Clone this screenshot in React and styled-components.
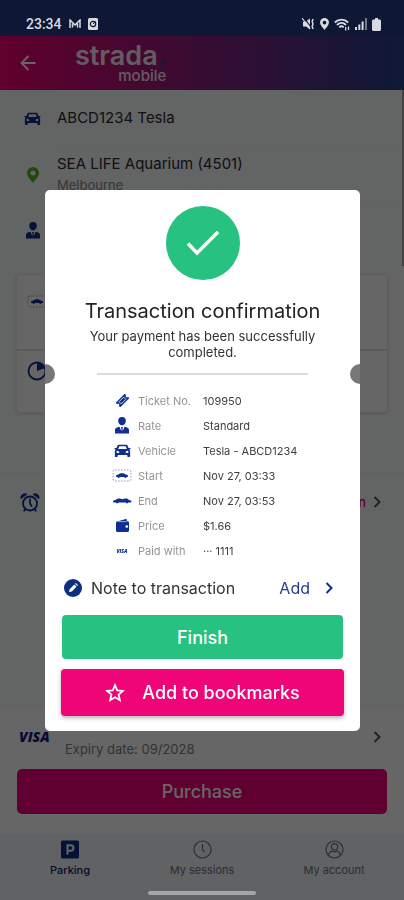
import styled, { createGlobalStyle } from "styled-components";

const GlobalStyle = createGlobalStyle`
    * {
        box-sizing: border-box;
    }
    body {
        margin: 0;
        background: #f8f9fb;
        font-family: Inter, "Open Sans", sans-serif;
        color: #2b2b2b;
    }
    button {
        font-family: inherit;
        border: 0;
        padding: 0;
        background: none;
        cursor: pointer;
    }
    svg {
        display: block;
        flex: none;
    }
    h1, p, dl, dd {
        margin: 0;
    }
`;

const Screen = styled.div`
    display: flex;
    flex-direction: column;
    min-height: 100vh;
`;

const StatusBar = styled.div`
    position: relative;
    z-index: 3;
    display: flex;
    justify-content: space-between;
    align-items: center;
    height: 36px;
    padding: 12px 23px 0 26px;
    background: #0e1834;
    color: #d8dae0;
    font-family: Roboto, sans-serif;
    font-size: 14px;
    font-weight: 500;
`;

const StatusGroup = styled.div`
    display: flex;
    align-items: center;
    gap: ${(p) => p.$gap}px;
`;

const Header = styled.header`
    display: flex;
    align-items: center;
    height: 54px;
    padding-left: 20px;
    gap: 39px;
    background: linear-gradient(90deg, #f00070, #24408c);
    color: #fff;
`;

const Logo = styled.div`
    display: flex;
    flex-direction: column;
    align-items: flex-end;
    opacity: 0.9;
    .name {
        font-size: 27px;
        font-weight: 600;
        line-height: 24px;
    }
    .name span {
        color: #284696;
    }
    .sub {
        padding-top: 1px;
        font-size: 15px;
        font-weight: 500;
        line-height: 14px;
    }
`;

const Content = styled.main`
    flex: 1;
    position: relative;
    color: #2b2b2b;
`;

const ScrollThumb = styled.div`
    position: absolute;
    top: 0;
    right: 0;
    width: 2px;
    height: 176px;
    background: #a8a8a8;
`;

const InfoRow = styled.div`
    display: grid;
    grid-template-columns: 17px 1fr;
    gap: 16px;
    align-items: center;
    justify-items: center;
    height: ${(p) => p.$height}px;
    padding-left: 24px;
    color: #0d2f8f;
`;

const InfoText = styled.div`
    justify-self: stretch;
    align-self: stretch;
    display: flex;
    flex-direction: column;
    justify-content: center;
    gap: 3px;
    border-bottom: 1px solid #f1f2f4;
    color: #2b2b2b;
    font-size: 15px;
    line-height: 18px;
    small {
        color: #8a8a8a;
        font-size: 13px;
    }
`;

const TimeCard = styled.section`
    margin: 15px 16px 60px;
    border: 1px solid #eceded;
    border-radius: 4px;
    background: #fff;
    box-shadow: 0 1px 3px rgba(0, 0, 0, 0.15);
    color: #0d2f8f;
`;

const TimeSlot = styled.div`
    height: ${(p) => p.$height}px;
    padding: ${(p) => p.$top}px 10px 0;
    & + & {
        border-top: 2px solid #e2e3e4;
    }
`;

const ReminderRow = styled.div`
    display: flex;
    align-items: center;
    height: 57px;
    padding: 0 22px 0 20px;
    border-top: 1px solid #f0f1f3;
    color: #0d2f8f;
    font-size: 13px;
    span {
        margin-left: auto;
        margin-right: 7px;
        color: #f0006e;
        font-weight: 500;
    }
`;

const Checkout = styled.section`
    padding: 10px 17px 20px;
    background: #fff;
`;

const CardRow = styled.div`
    display: flex;
    align-items: center;
    height: 37px;
    padding: 0 5px 0 2px;
    margin-bottom: 14px;
    strong {
        width: 46px;
        color: #0f1e78;
        font-family: "Open Sans", sans-serif;
        font-size: 14px;
        font-style: italic;
        font-weight: 800;
    }
    span {
        flex: 1;
        padding-top: 24px;
        color: #808080;
        font-size: 13px;
    }
`;

const PurchaseButton = styled.button`
    display: block;
    width: 100%;
    height: 45px;
    border-radius: 5px;
    background: #f00078;
    color: #fff;
    font-size: 18px;
    font-weight: 500;
`;

const TabBar = styled.nav`
    display: grid;
    grid-template-columns: repeat(3, 1fr);
    height: 66px;
    padding: 6px 4px 0;
    background: #f0f4f8;
`;

const Tab = styled.a`
    display: flex;
    flex-direction: column;
    align-items: center;
    gap: 4px;
    color: ${(p) => (p.$active ? "#0c2361" : "#707580")};
    font-size: 11px;
    font-weight: ${(p) => (p.$active ? 500 : 400)};
    line-height: 14px;
    text-decoration: none;
`;

const Overlay = styled.div`
    position: fixed;
    inset: 0;
    z-index: 2;
    display: flex;
    align-items: center;
    justify-content: center;
    padding: 21px 44px 0 45px;
    background: rgba(0, 0, 0, 0.6);
`;

const HomeIndicator = styled.div`
    position: fixed;
    bottom: 5px;
    left: 0;
    right: 0;
    z-index: 3;
    width: 108px;
    height: 4px;
    margin: 0 auto;
    border-radius: 2px;
    background: #a6a6a6;
`;

const Modal = styled.section`
    display: flex;
    flex-direction: column;
    align-items: center;
    width: 100%;
    padding: 16px 16px 15px;
    border-radius: 5px;
    background: #fff;
`;

const Success = styled.div`
    display: flex;
    align-items: center;
    justify-content: center;
    width: 74px;
    height: 74px;
    border-radius: 50%;
    background: #27c281;
`;

const Title = styled.h1`
    margin-top: 18px;
    color: #222;
    font-size: 20px;
    font-weight: 400;
    line-height: 26px;
    text-align: center;
`;

const Message = styled.p`
    padding: 0 20px;
    margin-top: 4px;
    color: #333;
    font-size: 13px;
    line-height: 16px;
    text-align: center;
`;

const TearLine = styled.div`
    align-self: stretch;
    display: flex;
    align-items: center;
    justify-content: space-between;
    margin: 4px -16px;
    &::before,
    &::after {
        content: "";
        width: 10px;
        height: 20px;
        background: #777;
    }
    &::before {
        border-radius: 0 10px 10px 0;
    }
    &::after {
        border-radius: 10px 0 0 10px;
    }
    hr {
        flex: 1;
        height: 2px;
        margin: 0 42px;
        border: 0;
        background: #dcdcdc;
    }
`;

const Details = styled.dl`
    align-self: stretch;
    padding-left: 50px;
`;

const Detail = styled.div`
    display: grid;
    grid-template-columns: 22px 60px 1fr;
    column-gap: 5px;
    align-items: center;
    height: 25px;
    color: #0d2f8f;
    font-size: 11px;
    svg {
        justify-self: center;
    }
    dt {
        color: #949494;
    }
    dd {
        color: #404040;
    }
`;

const NoteRow = styled.div`
    align-self: stretch;
    display: flex;
    align-items: center;
    height: 22px;
    margin: 14px 0 16px;
    padding: 0 10px 0 3px;
    gap: 9px;
    color: #0d2f7f;
    font-size: 16px;
    span {
        flex: 1;
        color: #333;
    }
    button {
        display: flex;
        align-items: center;
        gap: 15px;
        color: #24408c;
        font-size: 16px;
    }
`;

const ActionButton = styled.button`
    display: flex;
    align-items: center;
    justify-content: center;
    gap: 17px;
    width: ${(p) => (p.$raised ? "100%" : "calc(100% - 2px)")};
    height: ${(p) => (p.$raised ? 47 : 44)}px;
    margin-top: ${(p) => (p.$raised ? 10 : 0)}px;
    border-radius: 4px;
    background: ${(p) => (p.$raised ? "#f00578" : "#27c281")};
    box-shadow: ${(p) => (p.$raised ? "0 2px 4px rgba(0, 0, 0, 0.3)" : "none")};
    color: #fff;
    font-size: 18px;
    font-weight: 500;
`;

const CarIcon = () => (
    <svg width="17" height="13" viewBox="0 0 20 16" fill="currentColor">
        <path
            fillRule="evenodd"
            d="M5.600 1h8.800c.9 0 1.500.4 1.900 1.300L17.400 5h1.800c.6 0 .8.300.8.700 0 .6-.4.900-1.100.9h-.7c.8.700 1.200 1.500 1.200 2.600V15c0 .6-.4 1-1 1h-1.500c-.6 0-1-.4-1-1v-1.500H4.100V15c0 .6-.4 1-1 1H1.600c-.6 0-1-.4-1-1V9.200c0-1.100.4-1.900 1.200-2.600h-.7C.4 6.600 0 6.300 0 5.700 0 5.300.2 5 .8 5h1.800l1.100-2.700C4.100 1.400 4.700 1 5.600 1zm.4 1.700L4.700 6h10.600L14 2.700zM4 8.400a1.400 1.400 0 1 0 0 2.800h2c0-1.600-.7-2.800-2-2.800zm12 0c-1.300 0-2 1.200-2 2.800h2a1.400 1.400 0 1 0 0-2.800z"
        />
    </svg>
);

const PinIcon = ({ width, height, color = "currentColor" }) => (
    <svg width={width} height={height} viewBox="0 0 12 16" fill={color}>
        <path fillRule="evenodd" d="M6 0a6 6 0 0 0-6 6c0 3.500 4 7 6 10 2-3 6-6.500 6-10a6 6 0 0 0-6-6zm0 3.500a2.500 2.500 0 1 1 0 5 2.500 2.500 0 0 1 0-5z" />
    </svg>
);

const PersonIcon = () => (
    <svg width="14" height="17" viewBox="0 0 14 17" fill="currentColor">
        <path d="M3.200 3.700a3.800 3.700 0 0 1 7.600 0c0 2.200-1.600 4.600-3.800 4.600S3.200 5.900 3.200 3.700z" />
        <path d="M0 16.500v-3.200c0-1.700 1-2.600 2.600-3l1.900-.5L6.200 14l.3-2.600L6 10h2l-.5 1.400.3 2.600 1.700-4.200 1.900.5c1.600.4 2.600 1.300 2.600 3v3.200z" />
    </svg>
);

const TicketIcon = () => (
    <svg width="13" height="13" viewBox="0 0 14 14">
        <g transform="rotate(-45 7 7)">
            <path fill="currentColor" d="M0 3.500h14v2a1.500 1.500 0 0 0 0 3v2H0v-2a1.500 1.500 0 0 0 0-3z" />
            <path fill="none" stroke="#fff" strokeWidth=".8" d="M3.500 5.300h7v3.400h-7z" />
        </g>
    </svg>
);

const ParkedIcon = ({ dashed }) => (
    <svg width="20" height="13" viewBox="0 0 20 13">
        {dashed && (
            <rect x="1" y="1" width="18" height="11" rx="2" fill="none" stroke="currentColor" strokeWidth=".7" strokeDasharray="1.500 1.500" opacity=".7" />
        )}
        {dashed ? (
            <path fill="currentColor" d="M4 7.300c0-1 .9-1.500 2.200-1.700C7.300 4.600 8.400 4.200 10 4.200c1.600 0 2.600.5 3.600 1.400 1.600.1 2.500.7 2.500 1.700 0 .5-.3.800-.8.800h-1a1 1 0 0 1-2 0H7.700a1 1 0 0 1-2 0h-.9c-.5 0-.8-.3-.8-.8z" />
        ) : (
            <path fill="currentColor" d="M1 7.500c0-1 1-1.500 2.500-1.600C5 4.900 6 4.600 7.300 4.600c1.200 0 2 .3 2.900.7 1-.4 2-.7 3.400-.7 1.500 0 2.400.5 3.400 1.400 1.500.1 2.400.5 2.400 1.500 0 .6-.3.900-.9.900h-2.200a1.400 1.400 0 0 1-2.600 0H6.500a1.400 1.400 0 0 1-2.600 0H1.800c-.5 0-.8-.3-.8-.9z" />
        )}
    </svg>
);

const WalletIcon = () => (
    <svg width="13" height="13" viewBox="0 0 13 13">
        <path fill="currentColor" d="M2 2.200 9.800 0c.6-.1 1 .2 1 .8v1.400h.7c.8 0 1.500.6 1.500 1.400v7.900c0 .8-.7 1.500-1.500 1.500h-10C.7 13 0 12.300 0 11.500V3.800C0 3 .8 2.400 2 2.200z" />
        <path stroke="#fff" strokeWidth=".6" d="M2.300 2.600h8.500" />
        <rect x="9.500" y="6.300" width="2.500" height="2.500" rx="1" fill="#fff" />
    </svg>
);

const VisaMark = () => (
    <svg width="12" height="8" viewBox="0 0 12 8" role="img" aria-label="VISA">
        <text x="6" y="6" textAnchor="middle" fontFamily="Open Sans, sans-serif" fontSize="5" fontStyle="italic" fontWeight="800" fill="currentColor">
            VISA
        </text>
    </svg>
);

const PieIcon = () => (
    <svg width="20" height="20" viewBox="0 0 20 20">
        <circle cx="10" cy="10" r="8.500" fill="none" stroke="currentColor" strokeWidth="1.800" />
        <path fill="currentColor" d="M10 10V2a8 8 0 0 1 7.500 5.200z" />
    </svg>
);

const AlarmIcon = () => (
    <svg width="20" height="21" viewBox="0 0 20 21" fill="none" stroke="currentColor" strokeWidth="1.800" strokeLinecap="round">
        <circle cx="10" cy="11.500" r="7" />
        <path d="M10 7.500v4l1.500 2.500M5 17.500l-.8 1.200M15 17.500l.8 1.200" />
        <path fill="currentColor" strokeWidth="1" d="M1 6.200C.4 3.400 3.300.8 6.500 2.200zM19 6.200c.6-2.800-2.300-5.400-5.500-4z" />
    </svg>
);

const Chevron = ({ color = "currentColor", width = 2 }) => (
    <svg width="9" height="14" viewBox="0 0 9 14" fill="none" stroke={color} strokeWidth={width}>
        <path d="m1.500 2 5 5-5 5" />
    </svg>
);

const ClockIcon = () => (
    <svg width="19" height="19" viewBox="0 0 19 19" fill="none" stroke="currentColor" strokeWidth="1.200">
        <circle cx="9.500" cy="9.500" r="8.500" />
        <path d="M9.500 4v6l2.500 2" />
    </svg>
);

const AccountIcon = () => (
    <svg width="19" height="19" viewBox="0 0 19 19" fill="none" stroke="currentColor" strokeWidth="1.200">
        <circle cx="9.500" cy="9.500" r="8.500" />
        <circle cx="9.500" cy="6.800" r="3.200" />
        <path d="M3.500 15.200c.4-2.400 1.700-3.700 3.700-4.200 1.300 1.100 3.300 1.100 4.600 0 2 .5 3.300 1.800 3.700 4.200" />
    </svg>
);

const ParkingIcon = () => (
    <svg width="18" height="19" viewBox="0 0 18 19">
        <rect y=".5" width="18" height="18" rx="1.500" fill="#0c2f88" />
        <path fill="none" stroke="#fff" strokeWidth="2" d="M6.500 14.500V5.300h3.200a2.700 2.700 0 0 1 0 5.500H6.500" />
    </svg>
);

const details = [
    { icon: <TicketIcon />, label: "Ticket No.", value: "109950" },
    { icon: <PersonIcon />, label: "Rate", value: "Standard" },
    { icon: <CarIcon />, label: "Vehicle", value: "Tesla - ABCD1234" },
    { icon: <ParkedIcon dashed />, label: "Start", value: "Nov 27, 03:33" },
    { icon: <ParkedIcon />, label: "End", value: "Nov 27, 03:53" },
    { icon: <WalletIcon />, label: "Price", value: "$1.66" },
    { icon: <VisaMark />, label: "Paid with", value: "··· 1111" },
];

const Status = () => (
    <StatusBar>
        <StatusGroup $gap={7}>
            <span>23:34</span>
            <svg width="12" height="10" viewBox="0 0 12 10" fill="none" stroke="currentColor" strokeWidth="1.500">
                <path d="M1 9V1l5 5 5-5v8M3.500 8.500V4.500M8.500 8.500V4.500" />
            </svg>
            <svg width="10" height="12" viewBox="0 0 10 12">
                <rect width="10" height="12" rx="1.500" fill="currentColor" />
                <circle cx="5" cy="6" r="2.700" fill="none" stroke="#0e1834" strokeWidth="1.200" />
                <path stroke="#0e1834" d="m5 6 2.500-2.500" />
            </svg>
        </StatusGroup>
        <StatusGroup $gap={5}>
            <svg width="13" height="12" viewBox="0 0 13 12" fill="currentColor">
                <path d="M1 4h2l5-3.500v11L4 8.500H1z" />
                <path fill="none" stroke="#0e1834" strokeWidth="1.200" d="m2 0 7 9" />
                <path fill="none" stroke="currentColor" strokeWidth="1.200" d="m0 0 8 11" />
                <path fill="none" stroke="currentColor" strokeWidth="1.500" d="m11 1-.8 2.500.8 2.500-.8 2.500.8 2.500" />
            </svg>
            <PinIcon width={9} height={12} />
            <svg width="16" height="13" viewBox="0 0 16 13" fill="none" stroke="currentColor" strokeWidth="1.800">
                <path d="M.8 4.500c3.800-3.800 9.600-3.800 13.400 0M3 7c2.700-2.700 6.300-2.700 9 0M5.300 9.300c1.300-1.300 3.100-1.300 4.400 0" />
                <path strokeWidth="1.300" d="M11.700 12.500V9M14.500 8.500V12" />
            </svg>
            <svg width="12" height="12" viewBox="0 0 12 12" fill="currentColor">
                <path d="M0 9h2v3H0zM3.300 6.500h2V12h-2zM6.600 3.500h2V12h-2z" />
                <path opacity=".5" d="M10 0h2v12h-2z" />
            </svg>
            <svg width="9" height="13" viewBox="0 0 9 13" fill="currentColor">
                <path d="M3 0h3v1.500h1.500c.8 0 1.500.6 1.500 1.400v8.600c0 .8-.7 1.500-1.500 1.500h-6C.7 13 0 12.300 0 11.500V2.900c0-.8.7-1.400 1.500-1.400H3z" />
            </svg>
        </StatusGroup>
    </StatusBar>
);

const ParkingPage = () => (
    <>
        <Header>
            <button aria-label="Back">
                <svg width="16" height="16" viewBox="0 0 16 16" fill="none" stroke="#fff" strokeWidth="1.800">
                    <path d="M15.500 8H1.500M8.500 1 1.500 8l7 7" />
                </svg>
            </button>
            <Logo>
                <div className="name">strada<span>.</span></div>
                <div className="sub">mobile</div>
            </Logo>
        </Header>
        <Content>
            <ScrollThumb />
            <InfoRow $height={57}>
                <CarIcon />
                <InfoText>ABCD1234 Tesla</InfoText>
            </InfoRow>
            <InfoRow $height={55}>
                <PinIcon width={12} height={16} color="#4bbb18" />
                <InfoText>
                    SEA LIFE Aquarium (4501)
                    <small>Melbourne</small>
                </InfoText>
            </InfoRow>
            <InfoRow $height={57}>
                <PersonIcon />
            </InfoRow>
            <TimeCard>
                <TimeSlot $height={74} $top={20}>
                    <ParkedIcon dashed />
                </TimeSlot>
                <TimeSlot $height={63} $top={10}>
                    <PieIcon />
                </TimeSlot>
            </TimeCard>
            <ReminderRow>
                <AlarmIcon />
                <span>On</span>
                <Chevron color="#555" />
            </ReminderRow>
        </Content>
        <Checkout>
            <CardRow>
                <strong>VISA</strong>
                <span>Expiry date: 09/2028</span>
                <Chevron color="#555" />
            </CardRow>
            <PurchaseButton>Purchase</PurchaseButton>
        </Checkout>
        <TabBar>
            <Tab href="#parking" $active>
                <ParkingIcon />
                Parking
            </Tab>
            <Tab href="#sessions">
                <ClockIcon />
                My sessions
            </Tab>
            <Tab href="#account">
                <AccountIcon />
                My account
            </Tab>
        </TabBar>
    </>
);

const Confirmation = () => (
    <Overlay>
        <Modal role="dialog" aria-labelledby="confirmation-title">
            <Success>
                <svg width="34" height="26" viewBox="0 0 34 26" fill="none" stroke="#fff" strokeWidth="3.500">
                    <path d="m2 13.500 9 9.500L32 2" />
                </svg>
            </Success>
            <Title id="confirmation-title">Transaction confirmation</Title>
            <Message>Your payment has been successfully completed.</Message>
            <TearLine>
                <hr />
            </TearLine>
            <Details>
                {details.map((item) => (
                    <Detail key={item.label}>
                        {item.icon}
                        <dt>{item.label}</dt>
                        <dd>{item.value}</dd>
                    </Detail>
                ))}
            </Details>
            <NoteRow>
                <svg width="18" height="18" viewBox="0 0 18 18">
                    <circle cx="9" cy="9" r="9" fill="currentColor" />
                    <path fill="#fff" d="m5 13 .6-2.800 4.700-4.700 2.200 2.200-4.700 4.700zM11 4.800l.8-.8 2.200 2.200-.8.8z" />
                </svg>
                <span>Note to transaction</span>
                <button>
                    Add
                    <Chevron color="#0d2f8f" />
                </button>
            </NoteRow>
            <ActionButton>Finish</ActionButton>
            <ActionButton $raised>
                <svg width="20" height="19" viewBox="0 0 20 19" fill="none" stroke="#fff" strokeWidth="1.800">
                    <path d="m10 2.200 2.200 5.200 5.600.5-4.200 3.700 1.200 5.500-4.800-2.900-4.800 2.900 1.200-5.500L2.200 7.900l5.600-.5z" />
                </svg>
                Add to bookmarks
            </ActionButton>
        </Modal>
    </Overlay>
);

export default function App() {
    return (
        <>
            <GlobalStyle />
            <Screen>
                <Status />
                <ParkingPage />
            </Screen>
            <Confirmation />
            <HomeIndicator />
        </>
    );
}
